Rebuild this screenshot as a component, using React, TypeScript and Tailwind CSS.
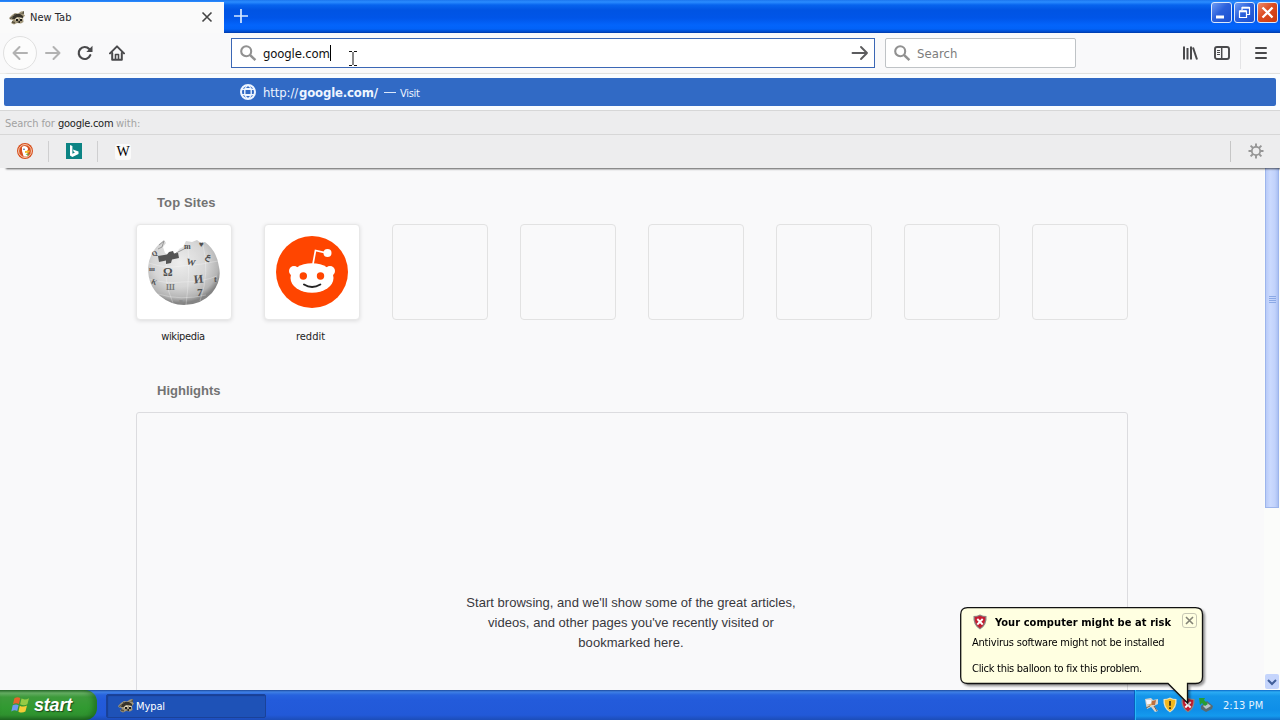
import React from "react";

const ui = "font-['DejaVu_Sans_Condensed','DejaVu_Sans',sans-serif] [font-stretch:condensed]";

function MypalIcon() {
  return (
    <svg width="17" height="16" viewBox="0 0 17 16" className="shrink-0">
      <path d="M0 8 L3 5 L6 3 L9 3.5 L12 1.5 L15 1 L14.5 4 L16 5.5 L14 8 L14.5 12 L12 13.5 L8 13 L5 14.5 L2 13 L4 10 L1 9.5Z" fill="#a1967a" />
      <path d="M4 6 L7 4 L11 4 L14 6 L14 9 L12 9 L11 7 L8 7 L6 9 L3 9Z" fill="#37332a" />
      <path d="M1 8 L4 6 L4 8 L1 9Z M10 3 L13 3 L15 1 L15 4Z M5 4 L7 4 L5 6Z" fill="#5b5646" />
      <path d="M6 9 L8 7.5 L10 8 L9 10 L7 11Z M11 7.5 L14 8 L13 10 L11 10Z" fill="#e3dbc2" />
      <path d="M7 9 H9 V11 H7Z M11 9 H13 V11 H11Z M8 12 L11 11 L11 13Z" fill="#1b1a17" />
      <path d="M3 11 L6 12 L6 13.5 L3 13Z" fill="#5c5542" />
    </svg>
  );
}

function Magnifier() {
  return (
    <svg width="17" height="17" viewBox="0 0 17 17" fill="none" stroke="#919191" className="shrink-0">
      <circle cx="6.2" cy="6.2" r="5" strokeWidth="2.1" />
      <path d="M9.9 9.9 L15.4 15.2" strokeWidth="2.5" />
    </svg>
  );
}

function TitleBar() {
  const button = "flex h-[21px] w-[21px] items-center justify-center rounded-[3px] border border-[#dce9fb]";
  return (
    <div className="flex h-[33px] shrink-0 bg-[linear-gradient(180deg,#1c76ee_0,#2a8cff_2px,#0764ee_5px,#0054e3_10px,#0055e8_18px,#0364fb_25px,#0162f8_29px,#0047c4_32px,#0038a5_33px)]">
      <div className="mt-[2px] flex w-[224px] items-center bg-[#fafafa] pl-[9px] pr-[11px]">
        <MypalIcon />
        <span className={`${ui} ml-[4px] text-[11px] leading-[16px] tracking-[0.02px] text-[#26262a]`}>New Tab</span>
        <svg width="12" height="12" viewBox="0 0 12 12" className="-mt-[2px] ml-auto" stroke="#444" strokeWidth="1.6">
          <path d="M1.5 1.5 L10.5 10.5 M10.5 1.5 L1.5 10.5" />
        </svg>
      </div>
      <svg width="16" height="16" viewBox="0 0 16 16" className="ml-[9px] mt-[8px]" stroke="#d5e8ff" strokeWidth="1.7">
        <path d="M8 1 V15 M1 8 H15" />
      </svg>
      <div className="ml-auto mr-[2px] mt-[2px] flex gap-[2px]">
        <div className={`${button} bg-[linear-gradient(135deg,#6e9cf5,#2b61dc_45%,#1b50cf)]`}>
          <svg width="19" height="19" viewBox="0 0 19 19"><path d="M4 12.5 h8 v3 h-8z" fill="#fff" /></svg>
        </div>
        <div className={`${button} bg-[linear-gradient(135deg,#6e9cf5,#2b61dc_45%,#1b50cf)]`}>
          <svg width="19" height="19" viewBox="0 0 19 19" fill="none" stroke="#fff">
            <path d="M7 7 V4.5 H14.5 V11.5 H12" strokeWidth="1.2" /><path d="M7 4.7 H14.5" strokeWidth="2" />
            <path d="M4.5 8 H11.5 V14.5 H4.5Z" strokeWidth="1.2" /><path d="M4.5 8.3 H11.5" strokeWidth="2" />
          </svg>
        </div>
        <div className={`${button} bg-[linear-gradient(135deg,#ee8a6b,#dc4b20_45%,#c93a10)]`}>
          <svg width="19" height="19" viewBox="0 0 19 19" stroke="#fff" strokeWidth="2.3"><path d="M4.5 4.5 L14.5 14.5 M14.5 4.5 L4.5 14.5" /></svg>
        </div>
      </div>
    </div>
  );
}

function NavBar() {
  return (
    <div className="flex h-[41px] shrink-0 items-center border-b border-[#ededea] bg-[#f9f9fa]">
      <div className="ml-[3px] flex h-[34px] w-[34px] items-center justify-center rounded-full border border-[#e0e0e0] bg-[#fcfcfc]">
        <svg width="16" height="16" viewBox="0 0 16 16" fill="none" stroke="#b2b2b2" strokeWidth="2" strokeLinecap="round" strokeLinejoin="round"><path d="M15 8 H1.5 M7.5 2 L1.5 8 L7.5 14" /></svg>
      </div>
      <svg width="16" height="16" viewBox="0 0 16 16" className="ml-[8px]" fill="none" stroke="#b2b2b2" strokeWidth="2" strokeLinecap="round" strokeLinejoin="round"><path d="M1 8 H14.5 M8.5 2 L14.5 8 L8.5 14" /></svg>
      <svg width="16" height="16" viewBox="0 0 16 16" className="ml-[16px]" fill="none" stroke="#4a4a4c" strokeWidth="2.2" strokeLinecap="round">
        <path d="M13.3 10.2 A6 6 0 1 1 12.2 4" /><path d="M15.5 0.8 V7 H9.3Z" fill="#4a4a4c" stroke="none" />
      </svg>
      <svg width="16" height="16" viewBox="0 0 16 16" className="ml-[16px]" fill="none" stroke="#4a4a4c" strokeWidth="2" strokeLinecap="round" strokeLinejoin="round">
        <path d="M1 8.4 L8 1.4 L15 8.4" /><path d="M3.2 8 V14.8 H12.8 V8" /><path d="M6.5 14 V9.5 H9.5 V14" strokeWidth="1.6" />
      </svg>
      <div className="ml-[106px] flex h-[30px] w-[644px] items-center border border-[#3b67b5] bg-white pl-[8px] pr-[5px]">
        <Magnifier />
        <span className={`${ui} ml-[6px] mt-[2px] text-[13px] tracking-[-0.15px] text-[#111]`}>google.com</span>
        <span className="h-[16px] w-px bg-black" />
        <svg width="10" height="17" viewBox="0 0 10 17" className="ml-[17px] mt-[10px]" fill="none" stroke="#111" strokeWidth="1">
          <path d="M1 1.5 H4 M6 1.5 H9 M5 2 V15 M1 15.5 H4 M6 15.5 H9" />
        </svg>
        <svg width="18" height="16" viewBox="0 0 18 16" className="ml-auto" fill="none" stroke="#5c5c5e" strokeWidth="1.9" strokeLinecap="round" strokeLinejoin="round"><path d="M1.5 8 H16 M10 2 L16 8 L10 14" /></svg>
      </div>
      <div className="ml-[10px] flex h-[30px] w-[191px] items-center rounded-[2px] border border-[#bfc3c6] bg-white pl-[8px]">
        <Magnifier />
        <span className={`${ui} ml-[6px] mt-[2px] text-[13px] tracking-[0.05px] text-[#7c7c7c]`}>Search</span>
      </div>
      <svg width="16" height="16" viewBox="0 0 16 16" className="ml-[106px]" fill="none" stroke="#4a4a4c" strokeWidth="2"><path d="M2 1.5 V14.5 M5.5 3 V14.5 M9 1.5 V14.5 M11 2.5 L15 14.5" /></svg>
      <svg width="16" height="16" viewBox="0 0 16 16" className="ml-[16px]" fill="none" stroke="#4a4a4c"><rect x="1" y="2" width="14" height="12" rx="2" strokeWidth="1.9" /><path d="M7.7 2 V14" strokeWidth="1.5" /><path d="M3 5.5 H6 M3 7.5 H6 M3 9.5 H6" /></svg>
      <span className="ml-[10px] h-[31px] w-px bg-[#e4e4e6]" />
      <svg width="12" height="14" viewBox="0 0 12 14" className="ml-[14px]" stroke="#48484a" strokeWidth="2" strokeLinecap="round"><path d="M1 2 H11 M1 7 H11 M1 12 H11" /></svg>
    </div>
  );
}

function Suggestions() {
  return (
    <div className="relative z-10 flex h-[94px] shrink-0 flex-col bg-[#ededee] shadow-[6px_1px_2px_rgba(0,0,0,0.65)]">
      <div className="h-[36px] bg-[#fafdff] px-[4px] pt-[4px]">
        <div className={`${ui} flex h-[28px] items-center rounded-[2px] bg-[#316ac5] pl-[236px] text-[13px] text-[#eef5ff]`}>
          <svg width="16" height="16" viewBox="0 0 16 16" fill="none" stroke="#eef5ff" className="mr-[7px]">
            <circle cx="8" cy="8" r="7" strokeWidth="2" /><rect x="4.8" y="4.8" width="6.4" height="6.4" rx="1" strokeWidth="1.4" /><path d="M5 5 Q6 2 8 1.5 Q10 2 11 5 M5 11 Q6 14 8 14.5 Q10 14 11 11 M1.5 5.4 H14.5 M1.5 10.6 H14.5" strokeWidth="1.2" />
          </svg>
          <span className="mt-[2px] w-[36px] whitespace-nowrap tracking-[-0.1px]">http://</span>
          <b className="mt-[2px] w-[79px] whitespace-nowrap tracking-[-0.17px]">google.com/</b>
          <span className="ml-[6px] h-px w-[12px] bg-[#dbe8fb]" />
          <span className="ml-[4px] mt-[4px] text-[11px] tracking-[-0.3px]">Visit</span>
        </div>
      </div>
      <div className={`${ui} flex h-[25px] items-center border-b border-t border-[#d7d7d7] pl-[5px] pt-[3px] text-[11px] leading-[16px] text-[#a2a2a2]`}>
        <span className="w-[53px] whitespace-nowrap tracking-[-0.1px]">Search for</span>
        <span className="w-[58px] whitespace-nowrap tracking-[-0.25px] text-[#1c1c1c]">google.com</span>
        <span>with:</span>
      </div>
      <div className="flex h-[33px] items-center">
        <svg width="16" height="16" viewBox="0 0 16 16" className="-mt-px ml-[17px]">
          <circle cx="8" cy="8" r="8" fill="#d6501f" /><circle cx="8" cy="8" r="6.4" fill="none" stroke="#ffe3cc" strokeWidth=".9" />
          <path d="M5 4 Q7 2 10 4 Q12 6 10 8 L11 13 Q8 14 6.5 13 L5 8Z" fill="#fff" /><path d="M8 8 L13 7.5 L12 9.5 L8 10Z" fill="#f3bd27" /><path d="M8.5 11 L12 10.5 L11 13Z" fill="#67b34a" /><circle cx="7" cy="6.3" r=".8" fill="#2d4f8e" />
        </svg>
        <span className="ml-[15px] h-[21px] w-px bg-[#cfcfd0]" />
        <svg width="16" height="16" viewBox="0 0 16 16" className="-mt-px ml-[17px]"><path d="M0 0 H16 V16 H0Z" fill="#0c8484" /><path d="M4 2 L6.4 2.9 V10.8 L9 9.4 L7.7 8.8 L6.9 6.5 L12.5 8.5 V10.9 L6.4 14 L4 12.6Z" fill="#fff" /></svg>
        <span className="ml-[15px] h-[21px] w-px bg-[#cfcfd0]" />
        <span className="ml-[17px] flex h-[16px] w-[16px] items-center justify-center rounded-[3px] bg-[#fafafa] font-['Liberation_Serif',serif] text-[14px] leading-none text-black">W</span>
        <span className="ml-auto h-[21px] w-px bg-[#c6c6c6]" />
        <svg width="16" height="16" viewBox="0 0 16 16" className="-mt-px ml-[17px] mr-[16px]" fill="none" stroke="#969696"><circle cx="8" cy="8" r="4.2" strokeWidth="1.8" /><path d="M8 0.5 V4 M8 12 V15.5 M0.5 8 H4 M12 8 H15.5 M2.6 2.6 L5 5 M11 11 L13.4 13.4 M13.4 2.6 L11 5 M5 11 L2.6 13.4" strokeWidth="1.9" /></svg>
      </div>
    </div>
  );
}

function WikipediaGlobe() {
  return (
    <svg width="76" height="76" viewBox="0 0 76 76">
      <defs>
        <radialGradient id="globe" cx="44%" cy="35%" r="62%"><stop offset="0" stopColor="#ededed" /><stop offset=".6" stopColor="#d6d6d6" /><stop offset=".88" stopColor="#b4b4b4" /><stop offset="1" stopColor="#848484" /></radialGradient>
      </defs>
      <path d="M18 6 Q3 17 2 34 Q2 52 14 62 Q25 71 38 71 Q55 71 66 59 Q76 47 73 33 Q71 17 59 8 L55 9 L51 6 L46 8 L40 7 L37 13 L33 15 L31 20 L25 22 L19 19 L17 13 L20 9Z" fill="url(#globe)" />
      <g fill="none" stroke="#fff" strokeOpacity=".35" strokeWidth=".8">
        <path d="M3 29 Q20 35 36 32 Q55 31 72 27 M3 45 Q20 50 36 48 Q57 48 71 42 M12 60 Q35 67 60 61 M22 21 Q16 45 27 69 M42 13 Q44 40 40 71 M57 11 Q64 38 54 67" />
      </g>
      <path d="M12 22 L21 20.5 L23 18 L27 17 L28 19.5 L32 18.5 L33 24 L26 25.5 L25 29 L20 30 L20 26.5 L13 28Z" fill="#555" />
      <path d="M30 19 L42 13" stroke="#999" />
      <g fontFamily="Liberation Serif, serif" fontWeight="bold" fill="#505050">
        <text x="17" y="42" fontSize="12">Ω</text><text x="40" y="31" fontSize="9" transform="rotate(12 44 30)">W</text>
        <text x="48" y="49" fontSize="12" transform="rotate(-6 52 46)">И</text><text x="51" y="62" fontSize="11">7</text>
        <text x="20" y="56" fontSize="8" fill="#777">Ш</text><text x="53" y="13" fontSize="8">♥</text>
        <text x="61" y="26" fontSize="9" transform="rotate(28 64 22)">ع</text><text x="3" y="37" fontSize="7">ш</text>
        <text x="5" y="50" fontSize="7" transform="rotate(25 7 49)">K</text><text x="6" y="22" fontSize="7" transform="rotate(-25 8 20)">Q</text>
        <text x="38" y="15" fontSize="8">m</text><text x="68" y="48" fontSize="8">t</text>
        <text x="33" y="70" fontSize="6" fill="#888">B</text>
      </g>
      <path d="M13 11 L18 7 L16 13 L12 15" fill="none" stroke="#999" />
    </svg>
  );
}

function RedditLogo() {
  return (
    <svg width="72" height="72" viewBox="0 0 72 72">
      <circle cx="36" cy="36" r="36" fill="#ff4500" />
      <g fill="#fff"><circle cx="18" cy="35" r="5" /><circle cx="54" cy="35" r="5" /><ellipse cx="36" cy="42" rx="21.5" ry="14.8" /><circle cx="51.5" cy="17" r="4" /></g>
      <path d="M37 28 L39.5 14.5 L50 16.8" fill="none" stroke="#fff" strokeWidth="1.7" />
      <circle cx="27.3" cy="40" r="3.7" fill="#ff4500" /><circle cx="44.5" cy="40" r="3.7" fill="#ff4500" />
      <path d="M28 48.5 Q36 53.5 44.3 48.5" fill="none" stroke="#242424" strokeWidth="2" strokeLinecap="round" />
    </svg>
  );
}

function NewTabPage() {
  const tile = "flex h-[96px] w-[96px] items-center justify-center rounded-[4px] border";
  const filled = "border-[#e8e8e8] bg-white shadow-[0_1px_4px_rgba(0,0,0,0.12)]";
  const heading = "pl-[21px] font-['Liberation_Sans',sans-serif] text-[13px] font-bold leading-[20px] text-[#737373]";
  return (
    <div className="flex min-h-0 flex-1 bg-[#f9f9fa]">
      <main className="flex min-w-0 flex-1 flex-col overflow-hidden pl-[136px] pt-[25px]">
        <h2 className={`${heading} tracking-[0.12px]`}>Top Sites</h2>
        <div className="mt-[11px] flex gap-[32px]">
          <div className={`${tile} ${filled}`}><WikipediaGlobe /></div>
          <div className={`${tile} ${filled}`}><RedditLogo /></div>
          {[0, 1, 2, 3, 4, 5].map((i) => <div key={i} className={`${tile} border-[#e2e2e2]`} />)}
        </div>
        <div className={`${ui} mt-[9px] flex gap-[32px] text-center text-[11px] leading-[16px] text-[#222]`}>
          <span className="w-[94px] tracking-[-0.35px]">wikipedia</span>
          <span className="w-[97px] tracking-[0px]">reddit</span>
        </div>
        <h2 className={`${heading} mt-[36px]`}>Highlights</h2>
        <section className="mt-[11px] flex h-[300px] w-[992px] shrink-0 justify-center rounded-[3px] border border-[#dcdcdf] pt-[180px]">
          <p className="mr-[2px] whitespace-nowrap text-center font-['Liberation_Sans',sans-serif] text-[13px] leading-[20px] tracking-[0.03px] text-[#38383d]">
            Start browsing, and we'll show some of the great articles,<br />videos, and other pages you've recently visited or<br />bookmarked here.
          </p>
        </section>
      </main>
      <div className="flex w-[16px] flex-col bg-[#fbfcfa] pb-px">
        <div className="ml-px mr-px flex h-[340px] flex-col items-center justify-center gap-px border border-t-0 border-[#9db5ec] bg-[linear-gradient(90deg,#b9cbf8,#cbdafe_35%,#c1d2fb_75%,#aac0f2)] pb-[76px]">
          {[0, 1, 2, 3].map((i) => <span key={i} className="h-px w-[7px] bg-[#8ba9e6]" />)}
        </div>
        <div className="ml-px mt-auto flex h-[15px] w-[14px] items-center justify-center rounded-[2px] bg-[#c5d5fc]">
          <svg width="10" height="8" viewBox="0 0 10 8" fill="none" stroke="#42609a" strokeWidth="2"><path d="M1 2 L5 6 L9 2" /></svg>
        </div>
      </div>
    </div>
  );
}

const shield = "M8 0.5 Q11 2 14.5 2 Q15.5 11 8 15.5 Q0.5 11 1.5 2 Q5 2 8 0.5Z";

function AlertShield({ size }: { size: number }) {
  return (
    <svg width={size} height={size} viewBox="0 0 16 16" className="block shrink-0">
      <path d={shield} fill="#8e8583" /><path d="M8 1.8 Q11 3 13.3 3.1 Q13.8 10.5 8 14.2 Q2.2 10.5 2.7 3.1 Q5 3 8 1.8Z" fill="#c51c30" />
      <path d="M5.3 5 L10.7 10.5 M10.7 5 L5.3 10.5" stroke="#fff" strokeWidth="1.9" />
    </svg>
  );
}

function Taskbar() {
  return (
    <div className={`${ui} flex h-[30px] shrink-0 bg-[linear-gradient(180deg,#1c4a9c_0,#3f80e4_2px,#2663de_5px,#235bdb_10px,#2259d8_25px,#1c4db8_30px)] text-[11px] text-white`}>
      <div className="flex w-[97px] items-center rounded-r-[12px] bg-[linear-gradient(180deg,#2c7030_0,#68b065_3px,#3d9a3b_7px,#319a31_18px,#2f922f_25px,#226c25_30px)] pl-[11px] shadow-[inset_-4px_0_5px_rgba(10,70,10,0.4)]">
        <svg width="20" height="20" viewBox="0 0 20 20" className="shrink-0">
          <path d="M3.4 3.2 Q6.6 1.2 9.3 3 L7.9 9 Q5 7.5 2 9.2Z" fill="#e6632c" /><path d="M10.5 3.6 Q14 5.4 18 3.2 L16.4 9.3 Q13 11 9.1 9.3Z" fill="#95cb45" />
          <path d="M1.7 10.3 Q5 8.6 7.6 10.2 L6.2 16 Q3.5 14.5 .3 16.4Z" fill="#6d9af0" /><path d="M8.8 10.7 Q12.4 12.5 16 10.5 L14.4 16.6 Q10.9 18.5 7.4 16.7Z" fill="#f5cc37" />
        </svg>
        <span className="ml-[3px] font-['Liberation_Sans',sans-serif] text-[18px] font-bold italic leading-none tracking-[-0.2px] [text-shadow:1px_1px_1px_#1b481b]">start</span>
      </div>
      <div className="ml-[9px] mt-[4px] flex h-[24px] w-[160px] items-center rounded-[2px] border border-[#1a4299] bg-[#1e52b7] pl-[11px] shadow-[inset_1px_1px_1px_#183f93]">
        <MypalIcon />
        <span className="ml-[1px] mt-[2px] tracking-[-0.1px]">Mypal</span>
      </div>
      <div className="ml-auto flex w-[146px] items-center border-l border-[#0a5ebe] bg-[linear-gradient(180deg,#0c68c6_0,#2cacf4_2px,#1596ea_6px,#0f8fe8_20px,#149aee_26px,#0e6ec8_30px)] pl-[9px] shadow-[inset_1px_0_0_#27b8f6]">
        <svg width="16" height="16" viewBox="0 0 16 16"><path d="M1 2 L7 1 L9 3 L14 2 L14 7 L10 9 L14 14 L11 15 L7 10 L3 12 L2 8Z" fill="#d9d4cb" /><path d="M2 3 H7 V7 H3Z" fill="#f7f8ff" /><path d="M8 4 L12 3 L11 8 L7 8Z" fill="#bd7040" /><path d="M4 8 L8 6 L7 9Z" fill="#e9ad56" /><path d="M10 9 L13 14 M2 11 L6 9" stroke="#796451" /></svg>
        <svg width="16" height="16" viewBox="0 0 16 16" className="ml-[2px]"><path d={shield} fill="#e9e2bd" /><path d="M8 1.8 Q11 3 13.3 3.1 Q13.8 10.5 8 14.2 Q2.2 10.5 2.7 3.1 Q5 3 8 1.8Z" fill="#f2b81e" /><path d="M8 4 V8.8 M8 10.2 V12" stroke="#3d3519" strokeWidth="1.8" /></svg>
        <span className="ml-[2px]"><AlertShield size={16} /></span>
        <svg width="16" height="16" viewBox="0 0 16 16" className="ml-[2px]"><path d="M3 9 L9 4 L15 9 L14 12 L8 15 L3 12Z" fill="#596a70" /><path d="M5 9 L9 6 L13 9 L8 12Z" fill="#b8c4ca" /><path d="M1 1 L7 1 L6 3 L10 7 L7 9 L4 6 L2 8Z" fill="#269c34" /></svg>
        <span className="ml-[9px] mt-[2px] whitespace-nowrap tracking-[0.05px] text-[#e5f4ff]">2:13 PM</span>
      </div>
    </div>
  );
}

function Balloon() {
  return (
    <div className={`${ui} absolute left-[960px] top-[607px] z-20 h-[98px] w-[244px] text-[11px] text-black drop-shadow-[2px_2px_1px_rgba(0,0,0,0.4)]`}>
      <svg width="244" height="98" viewBox="0 0 244 98" className="absolute inset-0">
        <path d="M7.5 .7 H235.5 Q242.5 .7 242.5 7.5 V70 Q242.5 76.5 235.5 76.5 H227.5 V96 L208 76.5 H7.5 Q.7 76.5 .7 70 V7.5 Q.7 .7 7.5 .7Z" fill="#ffffe1" stroke="#111" strokeWidth="1.3" />
      </svg>
      <div className="relative flex h-[77px] flex-col pl-[12px] pr-[7px] pt-[5px]">
        <div className="flex h-[20px] items-center">
          <AlertShield size={16} />
          <b className="ml-[7px] mt-[2px] whitespace-nowrap tracking-[0.07px]">Your computer might be at risk</b>
          <span className="-mt-[4px] ml-auto flex h-[15px] w-[15px] items-center justify-center rounded-[3px] border border-[#c8c8b5]">
            <svg width="9" height="9" viewBox="0 0 9 9" stroke="#838376" strokeWidth="1.6"><path d="M1 1 L8 8 M8 1 L1 8" /></svg>
          </span>
        </div>
        <span className="mt-[3px] whitespace-nowrap leading-[16px] tracking-[-0.22px]">Antivirus software might not be installed</span>
        <span className="mt-[10px] whitespace-nowrap leading-[16px] tracking-[-0.28px]">Click this balloon to fix this problem.</span>
      </div>
    </div>
  );
}

export default function App() {
  return (
    <div className="relative flex h-[720px] w-[1280px] flex-col overflow-hidden">
      <TitleBar />
      <NavBar />
      <Suggestions />
      <NewTabPage />
      <Taskbar />
      <Balloon />
    </div>
  );
}
